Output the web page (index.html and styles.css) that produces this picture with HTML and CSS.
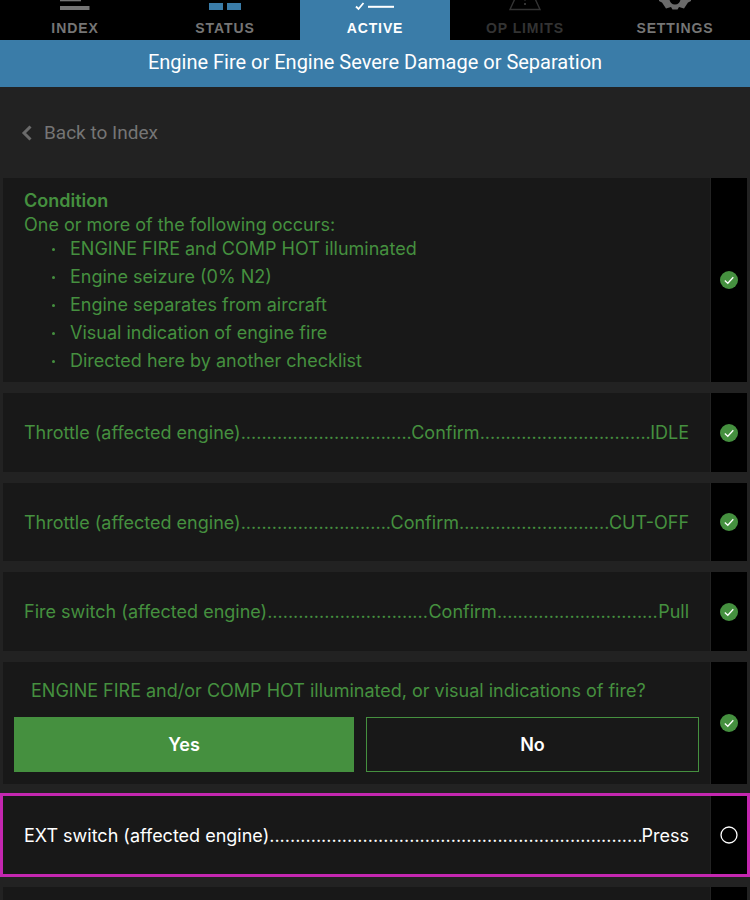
FILE: index.html
```html
<!DOCTYPE html>
<html lang="en">
<head>
<meta charset="utf-8">
<title>Engine Fire or Engine Severe Damage or Separation</title>
<link rel="stylesheet" href="styles.css">
</head>
<body>
<nav class="tabs">
  <div class="tab">
    <svg class="tab-icon" width="30" height="12" viewBox="0 0 30 12"><rect x="0" y="-2" width="21" height="4.3" fill="#757575"/><rect x="0" y="7" width="29.5" height="4" fill="#757575"/></svg>
    <span class="tab-label">INDEX</span>
  </div>
  <div class="tab">
    <svg class="tab-icon" width="32" height="12" viewBox="0 0 32 12"><rect x="0" y="-6" width="14" height="6.6" fill="#3a7ca8"/><rect x="18" y="-6" width="14" height="6.6" fill="#3a7ca8"/><rect x="0" y="4" width="14" height="7" fill="#3a7ca8"/><rect x="18" y="4" width="14" height="7" fill="#3a7ca8"/></svg>
    <span class="tab-label">STATUS</span>
  </div>
  <div class="tab tab-active">
    <svg class="tab-icon" width="40" height="12" viewBox="0 0 40 12"><path d="M1.5 -3 L3.5 -0.8 L7 -5" fill="none" stroke="#fff" stroke-width="1.8"/><path d="M1 7.5 L3.5 10 L8.5 4" fill="none" stroke="#fff" stroke-width="1.8"/><rect x="13" y="6.8" width="26" height="2" fill="#fff"/></svg>
    <span class="tab-label">ACTIVE</span>
  </div>
  <div class="tab tab-disabled">
    <svg class="tab-icon" width="34" height="12" viewBox="0 0 34 12"><path d="M10 -7 L24 -7 L32 10.5 L2 10.5 Z" fill="none" stroke="#333" stroke-width="1.4"/><rect x="16" y="-2" width="2" height="3.5" fill="#333"/><rect x="16" y="4" width="2" height="2" fill="#333"/></svg>
    <span class="tab-label">OP LIMITS</span>
  </div>
  <div class="tab">
    <svg class="tab-icon" width="32" height="12" viewBox="0 0 32 12"><path d="M16 -13 L19 -13 L20 -9.5 L24 -8 L27 -10 L30 -7 L28 -3.5 L29.5 0 L32 0.5 L32 2 L29 3.500 L27 6.500 L25 9.500 L20 8 L18.500 10.500 L13.500 10.500 L12 8 L7 9.500 L5 6.500 L3 3.500 L0 2 L0 0.500 L2.500 0 L4 -3.500 L2 -7 L5 -10 L8 -8 L12 -9.500 L13 -13 Z M16 -5.500 A 5.500 5.500 0 1 0 16 5.500 A 5.500 5.500 0 1 0 16 -5.500 Z" fill="#6b6b6b" fill-rule="evenodd"/></svg>
    <span class="tab-label">SETTINGS</span>
  </div>
</nav>
<header class="title">Engine Fire or Engine Severe Damage or Separation</header>
<div class="back">
  <svg class="back-icon" width="12" height="16" viewBox="0 0 12 16"><path d="M9.500 1.500 L3 8 L9.500 14.500" fill="none" stroke="#6b6b6b" stroke-width="3"/></svg>
  <span>Back to Index</span>
</div>
<main class="list">
  <section class="row row-condition">
    <div class="body body-condition done">
      <div class="cond-head">Condition</div>
      <div class="cond-intro">One or more of the following occurs:</div>
      <ul class="cond-list">
        <li>ENGINE FIRE and COMP HOT illuminated</li>
        <li>Engine seizure (0% N2)</li>
        <li>Engine separates from aircraft</li>
        <li>Visual indication of engine fire</li>
        <li>Directed here by another checklist</li>
      </ul>
    </div>
    <div class="status"><svg class="check" width="18" height="18" viewBox="0 0 18 18"><circle cx="9" cy="9" r="9" fill="#45903f"/><path d="M4.800 9.500 L7.800 12.300 L13.300 6.200" fill="none" stroke="#fff" stroke-width="1.300"/></svg></div>
  </section>
  <section class="row row-h79">
    <div class="body body-item done"><span>Throttle (affected engine)</span><span class="leader">........................................................................................................</span><span>Confirm</span><span class="leader">........................................................................................................</span><span>IDLE</span></div>
    <div class="status"><svg class="check" width="18" height="18" viewBox="0 0 18 18"><circle cx="9" cy="9" r="9" fill="#45903f"/><path d="M4.800 9.500 L7.800 12.300 L13.300 6.200" fill="none" stroke="#fff" stroke-width="1.300"/></svg></div>
  </section>
  <section class="row row-h78">
    <div class="body body-item done"><span>Throttle (affected engine)</span><span class="leader">........................................................................................................</span><span>Confirm</span><span class="leader">........................................................................................................</span><span>CUT-OFF</span></div>
    <div class="status"><svg class="check" width="18" height="18" viewBox="0 0 18 18"><circle cx="9" cy="9" r="9" fill="#45903f"/><path d="M4.800 9.500 L7.800 12.300 L13.300 6.200" fill="none" stroke="#fff" stroke-width="1.300"/></svg></div>
  </section>
  <section class="row row-h79">
    <div class="body body-item done"><span>Fire switch (affected engine)</span><span class="leader">........................................................................................................</span><span>Confirm</span><span class="leader">........................................................................................................</span><span>Pull</span></div>
    <div class="status"><svg class="check" width="18" height="18" viewBox="0 0 18 18"><circle cx="9" cy="9" r="9" fill="#45903f"/><path d="M4.800 9.500 L7.800 12.300 L13.300 6.200" fill="none" stroke="#fff" stroke-width="1.300"/></svg></div>
  </section>
  <section class="row row-question">
    <div class="body body-question done">
      <div class="question">ENGINE FIRE and/or COMP HOT illuminated, or visual indications of fire?</div>
      <div class="answers">
        <div class="answer answer-yes">Yes</div>
        <div class="answer answer-no">No</div>
      </div>
    </div>
    <div class="status status-question"><svg class="check" width="18" height="18" viewBox="0 0 18 18"><circle cx="9" cy="9" r="9" fill="#45903f"/><path d="M4.800 9.500 L7.800 12.300 L13.300 6.200" fill="none" stroke="#fff" stroke-width="1.300"/></svg></div>
  </section>
  <section class="row row-current">
    <div class="body body-item current"><span>EXT switch (affected engine)</span><span class="leader">........................................................................................................................................</span><span>Press</span></div>
    <div class="status"><svg class="check" width="18" height="18" viewBox="0 0 18 18"><circle cx="9" cy="9" r="8" fill="none" stroke="#fff" stroke-width="1.300"/></svg></div>
  </section>
  <section class="row row-next">
    <div class="body"></div>
    <div class="status"></div>
  </section>
</main>
</body>
</html>
```
FILE: styles.css
```css
* { box-sizing: border-box; }
html, body { margin: 0; padding: 0; }
body {
  width: 750px;
  height: 900px;
  overflow: hidden;
  background: #222222;
  font-family: Inter, "Liberation Sans", sans-serif;
  color: #fff;
}
.tabs {
  display: flex;
  height: 40px;
  background: #000;
  overflow: hidden;
}
.tab {
  width: 150px;
  height: 40px;
  display: flex;
  flex-direction: column;
  align-items: center;
  justify-content: flex-end;
  color: #757575;
}
.tab-icon { flex: none; overflow: visible; display: block; margin-bottom: 9px; }
.tab-label {
  font-family: "Liberation Sans", Arial, sans-serif;
  font-weight: 700;
  font-size: 14px;
  line-height: 16px;
  letter-spacing: 0.9px;
  margin-bottom: 4px;
}
.tab-active { background: #3a7ca8; color: #fff; }
.tab-disabled { color: #333; }
.title {
  height: 47px;
  background: #3a7ca8;
  display: flex;
  align-items: center;
  justify-content: center;
  font-size: 20px;
  padding-bottom: 3px;
  font-family: Roboto, sans-serif;
}
.back {
  height: 91px;
  display: flex;
  align-items: center;
  padding-left: 21px;
  gap: 11px;
  color: #757575;
  font-size: 19px;
  font-family: Roboto, sans-serif;
}
.list {
  padding: 0 3px;
  display: flex;
  flex-direction: column;
  gap: 11px;
}
.row { display: flex; flex: none; }
.row-condition { height: 204px; }
.row-h79 { height: 79px; }
.row-h78 { height: 78px; }
.row-question { height: 122px; }
.row-current {
  height: 84px;
  margin: -2px -3px -1px;
  border: 3px solid #c427b0;
}
.row-next { height: 40px; }
.body {
  flex: 1;
  min-width: 0;
  background: #181818;
  font-size: 18px;
}
.status {
  width: 36px;
  flex: none;
  margin-left: 1px;
  background: #000;
  display: flex;
  align-items: center;
  justify-content: center;
}
.status-question { align-items: flex-start; padding-top: 52px; }
.check { display: block; }
.done { color: #45903f; }
.current { color: #fff; }
.body-condition { padding: 11px 0 0 21px; line-height: 24px; }
.cond-head { font-weight: 600; }
.cond-list {
  list-style: none;
  margin: 0;
  padding: 0 0 0 46px;
}
.cond-list li { height: 28px; line-height: 24px; position: relative; }
.cond-list li::before {
  content: "";
  position: absolute;
  left: -18px;
  top: 11px;
  width: 3px;
  height: 3px;
  border-radius: 50%;
  background: #45903f;
}
.body-item {
  display: flex;
  align-items: center;
  padding: 0 21px;
  white-space: nowrap;
}
.leader { flex: 1; min-width: 0; overflow: hidden; }
.row-current .body-item { padding-right: 21px; }
.body-question { padding: 17px 11px 0 11px; }
.question { padding-left: 17px; line-height: 24px; height: 38px; }
.answers { display: flex; gap: 12px; }
.answer {
  height: 55px;
  display: flex;
  align-items: center;
  justify-content: center;
  font-weight: 600;
  color: #fff;
}
.answer-yes { width: 340px; background: #45903f; }
.answer-no { width: 333px; border: 1px solid #45903f; }
```
